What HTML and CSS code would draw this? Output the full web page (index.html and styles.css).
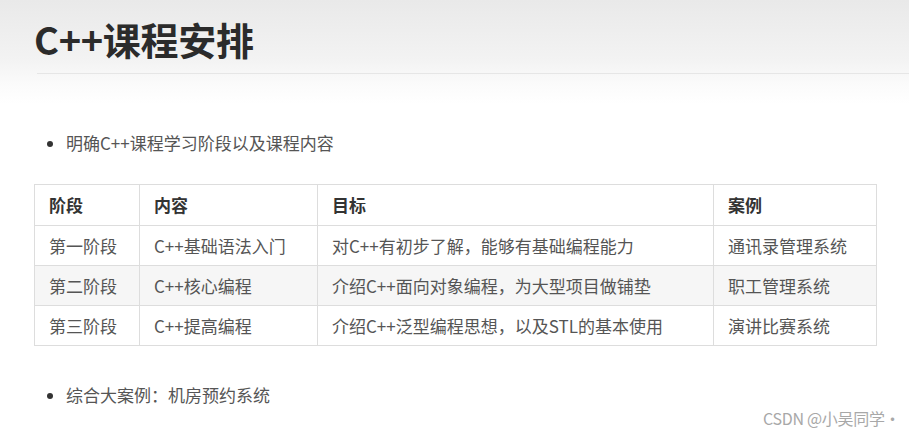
FILE: index.html
```html
<!DOCTYPE html>
<html lang="zh">
<head>
<meta charset="utf-8">
<title>C++课程安排</title>
<link rel="stylesheet" href="styles.css">
</head>
<body>
<div class="slide">
  <header class="head">
    <h1 class="title">C++课程安排</h1>
    <div class="rule"></div>
  </header>
  <ul class="points">
    <li>明确C++课程学习阶段以及课程内容</li>
  </ul>
  <table class="plan">
    <colgroup>
      <col class="c1"><col class="c2"><col class="c3"><col class="c4">
    </colgroup>
    <thead>
      <tr><th>阶段</th><th>内容</th><th>目标</th><th>案例</th></tr>
    </thead>
    <tbody>
      <tr><td>第一阶段</td><td>C++基础语法入门</td><td>对C++有初步了解，能够有基础编程能力</td><td>通讯录管理系统</td></tr>
      <tr class="alt"><td>第二阶段</td><td>C++核心编程</td><td>介绍C++面向对象编程，为大型项目做铺垫</td><td>职工管理系统</td></tr>
      <tr><td>第三阶段</td><td>C++提高编程</td><td>介绍C++泛型编程思想，以及STL的基本使用</td><td>演讲比赛系统</td></tr>
    </tbody>
  </table>
  <ul class="points second">
    <li>综合大案例：机房预约系统</li>
  </ul>
  <div class="mark">CSDN @小吴同学·</div>
</div>
</body>
</html>
```

FILE: styles.css
```css
* { box-sizing: border-box; }
html, body { margin: 0; padding: 0; background: #fff; }
body {
  width: 909px;
  height: 435px;
  overflow: hidden;
  font-family: "Noto Sans CJK SC", "Noto Sans", sans-serif;
  color: #555;
}
.slide {
  position: relative;
  width: 909px;
  height: 435px;
  overflow: hidden;
}
.head {
  height: 104px;
  padding-top: 15px;
  background: linear-gradient(#e9e9e9 0px, #f3f3f3 60px, #fbfbfb 85px, #ffffff 104px);
}
.title {
  margin: 0 0 0 34px;
  font-size: 38px;
  line-height: 48px;
  font-weight: 700;
  color: #2b2b2b;
  letter-spacing: -0.3px;
}
.rule {
  margin: 10px 0 0 37px;
  height: 1px;
  background: #e6e6e6;
}
.points {
  margin: 27px 0 0 0;
  padding: 0 0 0 66px;
  font-size: 17px;
  line-height: 24px;
  color: #555;
}
.points li { padding-left: 0; }
.points li::marker { color: #333; font-size: 16px; }
.plan {
  margin: 29px 0 0 34px;
  width: 842px;
  border-collapse: collapse;
  table-layout: fixed;
  font-size: 17px;
  color: #555;
}
.c1 { width: 105px; }
.c2 { width: 178px; }
.c3 { width: 396px; }
.c4 { width: 163px; }
.plan th, .plan td {
  border: 1px solid #dddddd;
  padding: 0 14px;
  text-align: left;
  white-space: nowrap;
  line-height: 24px;
}
.plan thead tr { height: 41px; }
.plan tbody tr { height: 40px; }
.plan th { font-weight: 700; color: #333; }
.plan .alt { background: #f6f6f6; }
.points.second { margin-top: 37px; }
.mark {
  position: absolute;
  left: 763px;
  top: 406px;
  font-size: 16px;
  line-height: 24px;
  color: #a8a8a8;
  white-space: nowrap;
  letter-spacing: -0.3px;
}
```
